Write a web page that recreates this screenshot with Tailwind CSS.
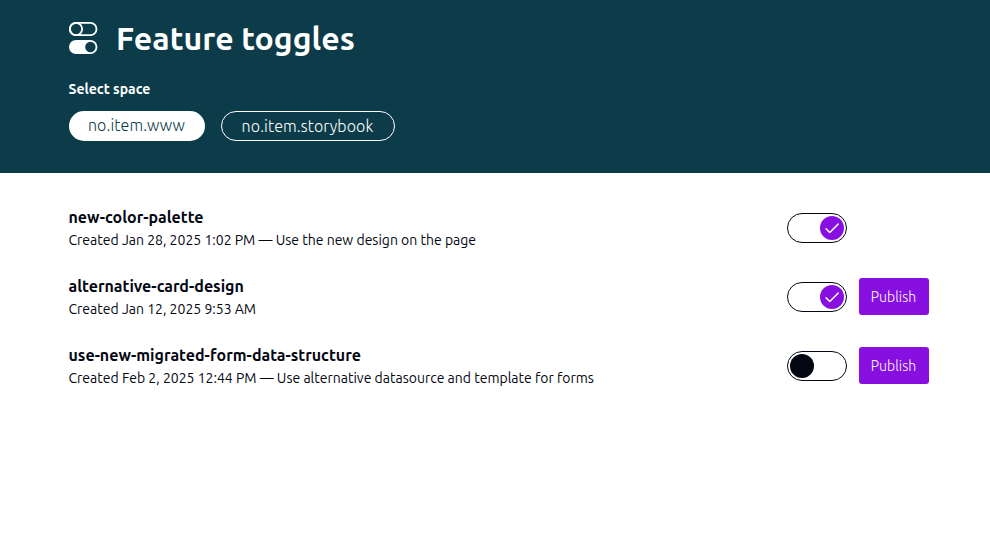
<!DOCTYPE html>
<html lang="en">
<head>
<meta charset="utf-8">
<title>Feature toggles</title>
<script src="https://cdn.jsdelivr.net/npm/@tailwindcss/browser@4"></script>
</head>
<body class="min-h-screen bg-white font-['Ubuntu','Open_Sans',sans-serif] text-[#030712] whitespace-nowrap">
<header class="flex h-[173px] flex-col bg-[#0c3c4a] px-[68.5px] pt-[18px] text-white">
  <div class="flex h-10 items-center gap-[18.5px]">
    <svg class="h-8 w-[29px] shrink-0" viewBox="0 0 29 32" fill="none" stroke="white" stroke-width="1.8">
      <rect x="0.9" y="0.9" width="26.6" height="12.2" rx="6.1"/>
      <circle cx="7" cy="7" r="6.1"/>
      <rect x="0.9" y="18.9" width="26.6" height="12.2" rx="6.1" fill="white"/>
      <circle cx="21.4" cy="25" r="5.2" fill="#0c3c4a" stroke="none"/>
    </svg>
    <h1 class="text-[32px] leading-10 font-semibold tracking-[0.03px]">Feature toggles</h1>
  </div>
  <p class="mt-[21px] text-sm leading-5 font-semibold">Select space</p>
  <div class="mt-3 flex gap-4">
    <button class="flex h-[30px] w-[136px] items-center justify-center rounded-full bg-white pb-0.5 font-light tracking-[0.1px] text-[#0c3c4a]">no.item.www</button>
    <button class="flex h-[30px] w-[174px] items-center justify-center rounded-full border border-white font-light tracking-[0.1px]">no.item.storybook</button>
  </div>
</header>
<main class="flex flex-col gap-[23px] pt-[33px] pr-[61px] pl-[68.5px]">
  <section class="flex h-[46px] items-center gap-3">
    <div class="flex-1">
      <h2 class="text-base leading-[22px] font-semibold">new-color-palette</h2>
      <p class="text-sm leading-6">Created Jan 28, 2025 1:02 PM — Use the new design on the page</p>
    </div>
    <div role="switch" aria-checked="true" class="mt-[-2px] mr-[82px] flex h-[30px] w-[60px] items-center justify-end rounded-full border border-[#030712] px-0.5">
      <div class="flex size-6 items-center justify-center rounded-full bg-[#8710e0]"><svg class="size-6" viewBox="0 0 24 24" fill="none" stroke="white" stroke-width="1.5" stroke-linecap="round" stroke-linejoin="round"><path d="M6 12.7 L9.8 16.5 L18.2 8"/></svg></div>
    </div>
  </section>
  <section class="flex h-[46px] items-center gap-3">
    <div class="flex-1">
      <h2 class="text-base leading-[22px] font-semibold">alternative-card-design</h2>
      <p class="text-sm leading-6">Created Jan 12, 2025 9:53 AM</p>
    </div>
    <div role="switch" aria-checked="true" class="mt-[-2px] flex h-[30px] w-[60px] items-center justify-end rounded-full border border-[#030712] px-0.5">
      <div class="flex size-6 items-center justify-center rounded-full bg-[#8710e0]"><svg class="size-6" viewBox="0 0 24 24" fill="none" stroke="white" stroke-width="1.5" stroke-linecap="round" stroke-linejoin="round"><path d="M6 12.7 L9.8 16.5 L18.2 8"/></svg></div>
    </div>
    <button class="mt-[-3px] h-[37px] w-[70px] rounded-[3px] bg-[#8710e0] pr-px text-sm font-light tracking-[0.08px] text-white">Publish</button>
  </section>
  <section class="flex h-[46px] items-center gap-3">
    <div class="flex-1">
      <h2 class="text-base leading-[22px] font-semibold">use-new-migrated-form-data-structure</h2>
      <p class="text-sm leading-6">Created Feb 2, 2025 12:44 PM — Use alternative datasource and template for forms</p>
    </div>
    <div role="switch" aria-checked="false" class="mt-[-2px] flex h-[30px] w-[60px] items-center rounded-full border border-[#030712] px-0.5">
      <div class="size-6 rounded-full bg-[#030712]"></div>
    </div>
    <button class="mt-[-3px] h-[37px] w-[70px] rounded-[3px] bg-[#8710e0] pr-px text-sm font-light tracking-[0.08px] text-white">Publish</button>
  </section>
</main>
</body>
</html>
